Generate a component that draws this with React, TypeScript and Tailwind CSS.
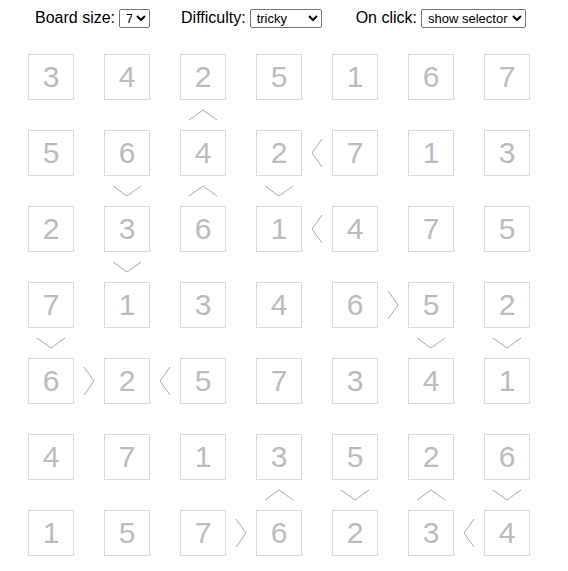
import React from 'react';

const BOARD = [
  [3, 4, 2, 5, 1, 6, 7],
  [5, 6, 4, 2, 7, 1, 3],
  [2, 3, 6, 1, 4, 7, 5],
  [7, 1, 3, 4, 6, 5, 2],
  [6, 2, 5, 7, 3, 4, 1],
  [4, 7, 1, 3, 5, 2, 6],
  [1, 5, 7, 6, 2, 3, 4],
];

// signs between columns c and c+1 in row r
const H: Record<string, '<' | '>'> = {
  '1-3': '<',
  '2-3': '<',
  '3-4': '>',
  '4-0': '>',
  '4-1': '<',
  '6-2': '>',
  '6-5': '<',
};

// signs between rows r and r+1 in column c ('^' = top is smaller)
const V: Record<string, '^' | 'v'> = {
  '0-2': '^',
  '1-1': 'v',
  '1-2': '^',
  '1-3': 'v',
  '2-1': 'v',
  '3-0': 'v',
  '3-5': 'v',
  '3-6': 'v',
  '5-3': '^',
  '5-4': 'v',
  '5-5': '^',
  '5-6': 'v',
};

const Chevron: React.FC<{ dir: '<' | '>' | '^' | 'v' }> = ({ dir }) => {
  if (dir === '^' || dir === 'v') {
    const d = dir === '^' ? 'M1 11 L15 1 L29 11' : 'M1 1 L15 11 L29 1';
    return (
      <svg width="30" height="12" viewBox="0 0 30 12">
        <path d={d} fill="none" stroke="#a9a9a9" strokeWidth="1" />
      </svg>
    );
  }
  const d = dir === '<' ? 'M11 1 L1 15 L11 29' : 'M1 1 L11 15 L1 29';
  return (
    <svg width="12" height="30" viewBox="0 0 12 30">
      <path d={d} fill="none" stroke="#a9a9a9" strokeWidth="1" />
    </svg>
  );
};

const Cell: React.FC<{ value: number }> = ({ value }) => (
  <div className="w-[46px] h-[46px] border border-[#dcdcdc] flex items-center justify-center text-[30px] leading-none text-[#bcbcbc]">
    {value}
  </div>
);

const selectCls =
  'border border-[#767676] rounded-[2px] bg-white text-[13px] text-black h-[19px] pl-[2px] pr-[1px] font-["Liberation_Sans",Arial,sans-serif]';

export default function App() {
  const cells: React.ReactNode[] = [];
  BOARD.forEach((row, r) => {
    row.forEach((v, c) => {
      cells.push(<Cell key={`c${r}-${c}`} value={v} />);
      if (c < 6) {
        const s = H[`${r}-${c}`];
        cells.push(
          <div key={`h${r}-${c}`} className="flex items-center justify-center">
            {s && <Chevron dir={s} />}
          </div>
        );
      }
    });
    if (r < 6) {
      for (let c = 0; c < 13; c++) {
        const s = c % 2 === 0 ? V[`${r}-${c / 2}`] : undefined;
        cells.push(
          <div key={`v${r}-${c}`} className="flex items-center justify-center">
            {s && <Chevron dir={s} />}
          </div>
        );
      }
    }
  });

  return (
    <div className="w-[568px] h-[571px] bg-white font-['Liberation_Sans',Arial,sans-serif] overflow-hidden">
      <div className="flex items-center pl-[35px] pt-[7px] h-[29px] text-[16px] text-black">
        <label className="flex items-center gap-[4px]">
          Board size:
          <select className={`${selectCls} w-[31px]`} defaultValue="7">
            <option>7</option>
          </select>
        </label>
        <label className="flex items-center gap-[4px] ml-[31px]">
          Difficulty:
          <select className={`${selectCls} w-[72px]`} defaultValue="tricky">
            <option>tricky</option>
          </select>
        </label>
        <label className="flex items-center gap-[4px] ml-[34px]">
          On click:
          <select className={`${selectCls} w-[105px]`} defaultValue="show selector">
            <option>show selector</option>
          </select>
        </label>
      </div>
      <div className="pl-[28px] pt-[25px]">
        <div className="grid grid-cols-[repeat(6,46px_30px)_46px] grid-rows-[repeat(6,46px_30px)_46px]">
          {cells}
        </div>
      </div>
    </div>
  );
}
